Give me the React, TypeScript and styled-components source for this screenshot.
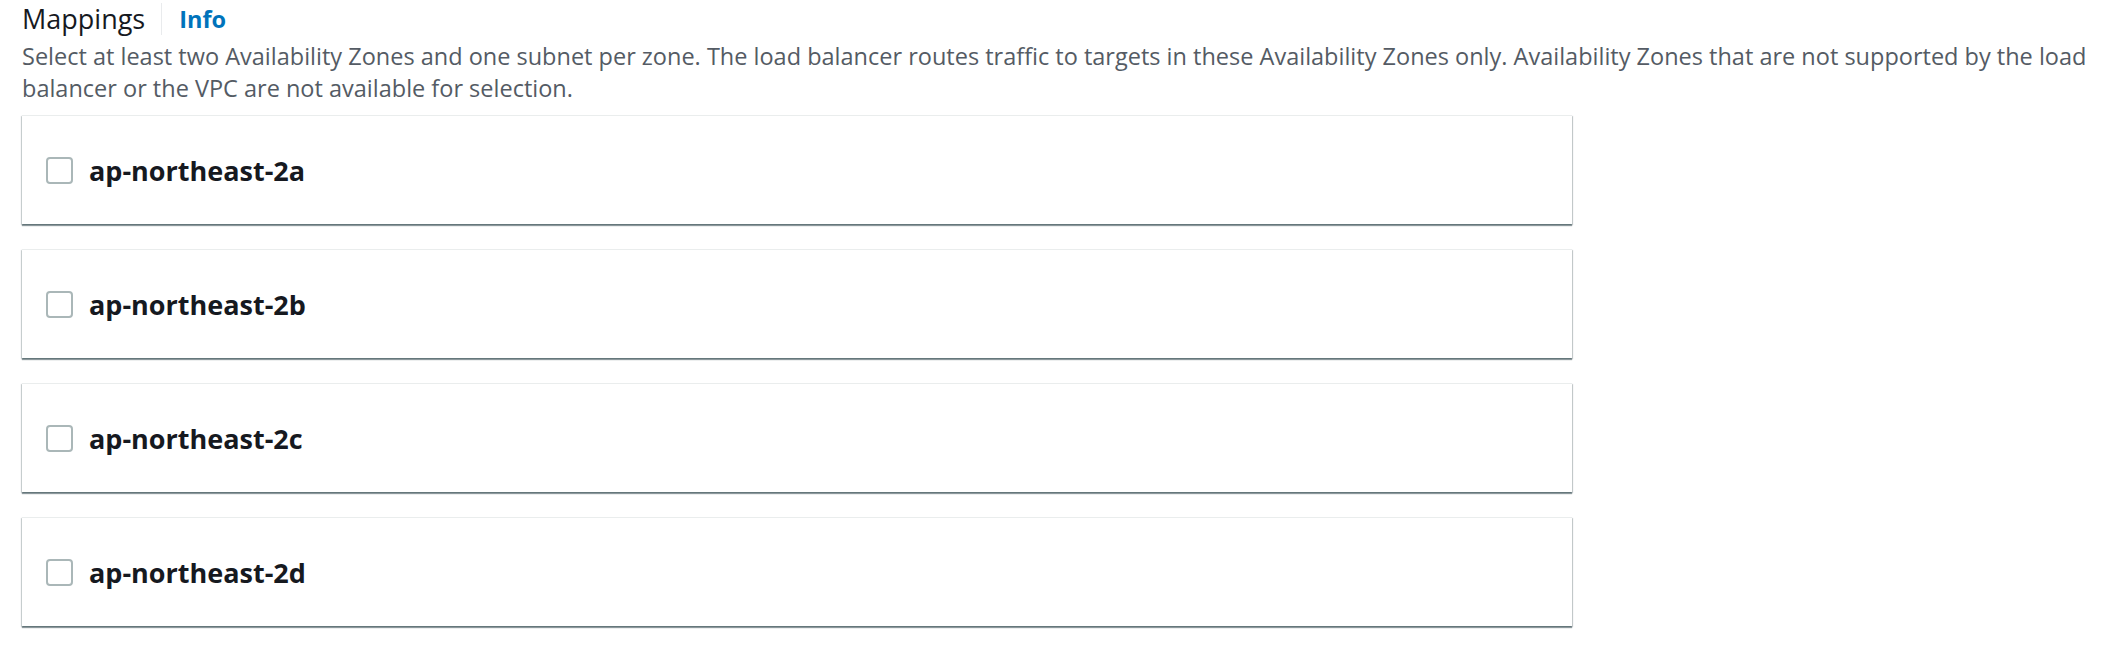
import React from "react";
import styled, { createGlobalStyle } from "styled-components";

const GlobalStyle = createGlobalStyle`
  html, body {
    margin: 0;
    padding: 0;
    background: #ffffff;
  }
  body {
    font-family: "Open Sans", "Noto Sans", sans-serif;
    -webkit-font-smoothing: antialiased;
  }
`;

const Page = styled.section`
  box-sizing: border-box;
  width: 2112px;
  min-height: 650px;
  padding: 1px 12px 24px 22px;
`;

const Header = styled.div`
  display: flex;
  align-items: center;
  height: 36px;
`;

const Title = styled.h2`
  margin: 0;
  font-size: 27px;
  font-weight: 400;
  line-height: 36px;
  color: #16191f;
`;

const Divider = styled.span`
  width: 1px;
  height: 32px;
  background: #e9ebed;
  margin: 0 17px 0 16px;
`;

const InfoLink = styled.a`
  font-size: 23.5px;
  font-weight: 700;
  line-height: 36px;
  color: #0073bb;
  text-decoration: none;
  cursor: pointer;
`;

const Description = styled.p`
  margin: 3.4px 0 0;
  font-size: 23.5px;
  line-height: 32px;
  color: #545b64;
`;

const ZoneList = styled.div`
  display: flex;
  flex-direction: column;
  gap: 25px;
  width: 1550px;
  margin-top: 11px;
`;

const ZoneCard = styled.label`
  box-sizing: border-box;
  display: flex;
  align-items: center;
  height: 109px;
  padding-left: 24px;
  background: #ffffff;
  border-top: 1px solid #eaeded;
  box-shadow: 0 2px 1px 0 rgba(0, 28, 36, 0.42),
    1px 1px 1px 0 rgba(0, 28, 36, 0.18),
    -1px 1px 1px 0 rgba(0, 28, 36, 0.16);
  cursor: pointer;
`;

const Checkbox = styled.input.attrs({ type: "checkbox" })`
  appearance: none;
  -webkit-appearance: none;
  box-sizing: border-box;
  width: 27px;
  height: 27px;
  margin: 0;
  border: 2px solid #aab7b8;
  border-radius: 4px;
  background: #ffffff;
  cursor: pointer;
  flex: none;
`;

const ZoneName = styled.span`
  margin-left: 16px;
  font-size: 27px;
  font-weight: 700;
  color: #16191f;
`;

const zones = [
  "ap-northeast-2a",
  "ap-northeast-2b",
  "ap-northeast-2c",
  "ap-northeast-2d",
];

export default function App() {
  return (
    <>
      <GlobalStyle />
      <Page>
        <Header>
          <Title>Mappings</Title>
          <Divider />
          <InfoLink>Info</InfoLink>
        </Header>
        <Description>
          Select at least two Availability Zones and one subnet per zone. The
          load balancer routes traffic to targets in these Availability Zones
          only. Availability Zones that are not supported by the load balancer
          or the VPC are not available for selection.
        </Description>
        <ZoneList>
          {zones.map((z) => (
            <ZoneCard key={z}>
              <Checkbox />
              <ZoneName>{z}</ZoneName>
            </ZoneCard>
          ))}
        </ZoneList>
      </Page>
    </>
  );
}
